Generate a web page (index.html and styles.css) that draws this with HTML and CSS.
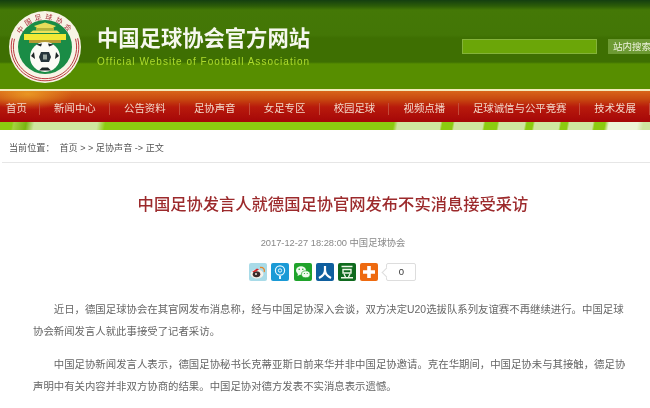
FILE: index.html
```html
<!DOCTYPE html>
<html lang="zh-CN">
<head>
  <meta charset="UTF-8" />
  <title>中国足球协会官方网站</title>
  <link rel="stylesheet" href="styles.css">
</head>
<body>
  <div class="header">
    <svg class="logo" viewBox="0 0 72 72" width="72" height="72">
      <defs>
        <path id="logoArc" d="M8.5 36 A27.5 27.5 0 0 1 63.5 36" />
      </defs>
      <circle cx="36" cy="36" r="36" fill="#f7f4e6" />
      <path d="M3.35 27.25 A33.8 33.8 0 1 0 68.65 27.25" fill="none" stroke="#bb3a40" stroke-width="1" />
      <path d="M5.5 27.8 A31.6 31.6 0 1 0 66.5 27.8" fill="none" stroke="#bb3a40" stroke-width="1" />
      <circle cx="36" cy="36" r="27" fill="#1a8c46" />
      <text class="logo-text"><textPath href="#logoArc" startOffset="50%" text-anchor="middle">中国足球协会</textPath></text>
      <path d="M25 15 L36 11.5 L47 15 L44 17 H28 Z" fill="#e9dc5a" />
      <rect x="27" y="17" width="18" height="2.5" fill="#b9b23a" />
      <path d="M21 22 L24 19.5 H48 L51 22 Z" fill="#efe35a" />
      <rect x="15" y="23" width="42" height="6" fill="#f2e935" />
      <path d="M20 29 h32 v3 h-32 z" fill="#b49a32" />
      <circle cx="36" cy="46" r="15" fill="#fbfbf6" />
      <path d="M32 41 h8 l2 5 -2 5 h-8 l-2 -5 z" fill="#26343a" />
      <path d="M34 43.5 h4 v5 h-4 z" fill="#9aa6a0" />
      <path d="M27 33.5 l6 -1 -1 3 z M45 33.5 l-6 -1 1 3 z M22 45 l3 -4 1 7 z M50 45 l-3 -4 -1 7 z M30 59.5 l3 -3 h6 l3 3 z" fill="#1d2426" />
    </svg>
    <div class="site-name">
      <div class="site-title">中国足球协会官方网站</div>
      <div class="site-sub">Official Website of Football Association</div>
    </div>
    <div class="search">
      <div class="search-box"></div>
      <div class="search-btn">站内搜索</div>
    </div>
  </div>

  <div class="nav">
    <a class="first">首页</a>
    <a>新闻中心</a>
    <a>公告资料</a>
    <a>足协声音</a>
    <a>女足专区</a>
    <a>校园足球</a>
    <a>视频点播</a>
    <a class="wide">足球诚信与公平竞赛</a>
    <a class="last">技术发展</a>
  </div>
  <div class="stripe"></div>

  <div class="crumbs">
    <span class="crumbs-label">当前位置：</span>
    <span>首页 &gt; &gt; 足协声音 -&gt; 正文</span>
  </div>

  <div class="article">
    <h1>中国足协发言人就德国足协官网发布不实消息接受采访</h1>
    <div class="meta">2017-12-27 18:28:00 中国足球协会</div>
    <div class="share">
      <svg viewBox="0 0 18 18" width="18" height="18">
        <rect width="18" height="18" rx="2" fill="#a9dbe8" />
        <ellipse cx="8" cy="11" rx="6.5" ry="4.6" fill="#f5f1ea" />
        <ellipse cx="7.5" cy="11.2" rx="3.8" ry="3" fill="#3a2a2a" />
        <circle cx="7" cy="11" r="1" fill="#e9e4dc" />
        <path d="M11 4.5 C14.5 4 16 6.5 15.2 9" fill="none" stroke="#e8862a" stroke-width="1.3" />
        <path d="M3 9 L8 5.5 L10 6.5 L6 9 Z" fill="#d8252a" />
      </svg>
      <svg viewBox="0 0 18 18" width="18" height="18">
        <rect width="18" height="18" rx="2" fill="#1a9ad6" />
        <circle cx="9" cy="7.5" r="4.6" fill="none" stroke="#e8f8ff" stroke-width="1.2" />
        <circle cx="9" cy="7.5" r="1.7" fill="none" stroke="#e8f8ff" stroke-width="1" />
        <path d="M8 13 V16 H10 V13" fill="#e8f8ff" />
      </svg>
      <svg viewBox="0 0 18 18" width="18" height="18">
        <rect width="18" height="18" rx="2" fill="#1fa32b" />
        <ellipse cx="7" cy="7.5" rx="5" ry="4.2" fill="#f2fbf0" />
        <path d="M4 10.5 L3.5 13 L6.5 11.5 Z" fill="#f2fbf0" />
        <ellipse cx="11.8" cy="11.3" rx="4.3" ry="3.5" fill="#f2fbf0" stroke="#1fa32b" stroke-width="0.7" />
        <circle cx="5.2" cy="6.3" r="0.8" fill="#1fa32b" />
        <circle cx="8.8" cy="6.3" r="0.8" fill="#1fa32b" />
        <circle cx="10.4" cy="10.5" r="0.6" fill="#1fa32b" />
        <circle cx="13.2" cy="10.5" r="0.6" fill="#1fa32b" />
      </svg>
      <svg viewBox="0 0 18 18" width="18" height="18">
        <rect width="18" height="18" rx="2" fill="#0f5f9e" />
        <path d="M9 3 V7 C9 10 7 13 3 15 M9 7 C9 10 11 13 15 15" fill="none" stroke="#fff" stroke-width="2.2" />
      </svg>
      <svg viewBox="0 0 18 18" width="18" height="18">
        <rect width="18" height="18" rx="2" fill="#0f6a1e" />
        <path d="M3.5 3.5 H14.5 M5 6.5 H13 V10 H5 Z M6 11 L7.5 14 M12 11 L10.5 14 M3 14.8 H15" fill="none" stroke="#eef8e8" stroke-width="1.4" />
      </svg>
      <svg viewBox="0 0 18 18" width="18" height="18">
        <rect width="18" height="18" rx="2" fill="#ee6a10" />
        <path d="M7.2 3 H10.8 V7.2 H15 V10.8 H10.8 V15 H7.2 V10.8 H3 V7.2 H7.2 Z" fill="#fff" />
      </svg>
      <div class="count">0</div>
    </div>
    <p>近日，德国足球协会在其官网发布消息称，经与中国足协深入会谈，双方决定U20选拔队系列友谊赛不再继续进行。中国足球协会新闻发言人就此事接受了记者采访。</p>
    <p>中国足协新闻发言人表示，德国足协秘书长克蒂亚斯日前来华并非中国足协邀请。克在华期间，中国足协未与其接触，德足协声明中有关内容并非双方协商的结果。中国足协对德方发表不实消息表示遗憾。</p>
  </div>
</body>
</html>
```
FILE: styles.css
```css
* {
  box-sizing: border-box;
}

html, body {
  margin: 0;
  padding: 0;
  height: 408px;
  overflow: hidden;
  background: #fff;
  font-family: "Liberation Sans", "Noto Sans CJK SC", sans-serif;
}

body {
  filter: blur(0.3px);
}

.header {
  height: 89px;
  display: flex;
  align-items: flex-start;
  padding-left: 9px;
  background: linear-gradient(to bottom, #143f10 0, #2c5c08 6px, #447806 10px, #437606 35px, #3e6f02 38px, #3e6f02 62px, #578e00 64px, #578e00 89px);
}

.logo {
  margin-top: 11px;
  flex: none;
}

.logo-text {
  font-size: 7px;
  letter-spacing: 3px;
  fill: #a8303a;
}

.site-name {
  margin-left: 16px;
  margin-top: 25px;
  width: 365px;
}

.site-title {
  font-size: 21.3px;
  line-height: 28px;
  font-weight: bold;
  color: #f6f8ee;
  white-space: nowrap;
}

.site-sub {
  margin-top: 2px;
  font-size: 10px;
  line-height: 14px;
  letter-spacing: 1.03px;
  color: #aedb2c;
  white-space: nowrap;
}

.search {
  margin-top: 39px;
  display: flex;
}

.search-box {
  width: 135px;
  height: 15px;
  background: #6ba608;
  border: 1px solid #84b33a;
}

.search-btn {
  margin-left: 11px;
  height: 15px;
  width: 42px;
  padding-left: 5px;
  background: #6d9a33;
  color: #eef3dd;
  font-size: 9.5px;
  line-height: 15px;
  white-space: nowrap;
  overflow: hidden;
}

.nav {
  height: 33px;
  display: flex;
  align-items: center;
  border-top: 2px solid #f4e9b8;
  padding-top: 4px;
  background:
    radial-gradient(ellipse 45px 16px at 28px 3px, rgba(240, 170, 40, 0.75), rgba(240, 170, 40, 0) 100%),
    linear-gradient(to bottom, #d9651a 0, #c84a10 8px, #b81a0c 16px, #a60808 30px, #a60808 100%);
}

.nav a {
  width: 70px;
  height: 12px;
  line-height: 12px;
  font-size: 10.4px;
  text-align: center;
  padding-left: 1px;
  color: #f2d9c8;
  border-right: 1px solid #c44a3a;
  white-space: nowrap;
}

.nav a.first {
  width: 40px;
  text-align: left;
  padding-left: 6px;
}

.nav a.wide {
  width: 121px;
}

.stripe {
  height: 8px;
  background: linear-gradient(100deg, #8ccb10 0, #8ccb10 12px, #a5d040 14px, #79b510 26px, #cfe6a0 34px, #cfe6a0 96px, #8ccb10 104px, #8ccb10 388px, #cfe6a0 392px, #cfe6a0 434px, #8ccb10 436px, #8ccb10 446px, #cfe6a0 448px, #cfe6a0 476px, #8ccb10 478px, #8ccb10 490px, #cfe6a0 492px, #cfe6a0 517px, #8ccb10 519px, #8ccb10 525px, #cfe6a0 527px, #cfe6a0 551px, #8ccb10 553px, #8ccb10 559px, #cfe6a0 561px, #cfe6a0 584px, #8ccb10 586px, #8ccb10 596px, #edf5d8 600px, #edf5d8 628px, #cfe6a0 634px, #cfe6a0 100%);
}

.crumbs {
  height: 33px;
  margin-left: 2px;
  padding: 12px 0 0 7px;
  border-bottom: 1px solid #e6e6e6;
  font-size: 9.1px;
  line-height: 13px;
  color: #555;
  display: flex;
  gap: 5px;
}

.article {
  padding: 0 20px 0 33px;
}

h1 {
  margin: 30px 0 0;
  padding-left: 3px;
  font-size: 16.3px;
  line-height: 22px;
  font-weight: 500;
  text-align: center;
  color: #9c2a2c;
}

.meta {
  margin-top: 21px;
  padding-left: 3px;
  font-size: 9.3px;
  line-height: 14px;
  text-align: center;
  color: #888;
}

.share {
  margin-top: 13px;
  margin-left: 216px;
  display: flex;
  gap: 4.3px;
  height: 18px;
}

.count {
  position: relative;
  margin-left: 3.5px;
  width: 30px;
  height: 18px;
  border: 1px solid #ddd;
  border-radius: 2px;
  font-size: 9.5px;
  line-height: 16px;
  text-align: center;
  color: #333;
}

.count::before {
  content: "";
  position: absolute;
  left: -4px;
  top: 5px;
  width: 6px;
  height: 6px;
  background: #fff;
  border-left: 1px solid #ddd;
  border-bottom: 1px solid #ddd;
  transform: rotate(45deg);
}

p {
  margin: 0 0 11px;
  font-size: 10.4px;
  line-height: 22px;
  text-indent: 2em;
  color: #666;
}

.share + p {
  margin-top: 18px;
}
```
